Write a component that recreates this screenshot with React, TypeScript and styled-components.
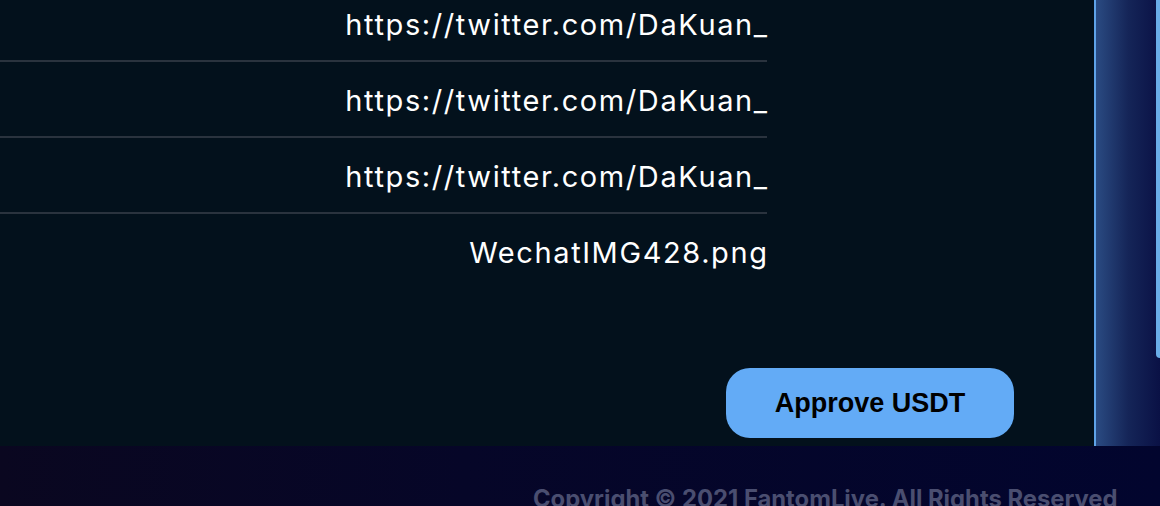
import styled, { createGlobalStyle } from "styled-components";

const GlobalStyle = createGlobalStyle`
    html, body {
        margin: 0;
        padding: 0;
        background: #02042c;
        overflow: hidden;
    }
    #root {
        width: 1160px;
        height: 506px;
    }
`;

const Page = styled.div`
    display: flex;
    flex-direction: column;
    width: 1160px;
    height: 506px;
    overflow: hidden;
`;

const Top = styled.div`
    display: flex;
    height: 446px;
`;

const Panel = styled.div`
    display: flex;
    flex-direction: column;
    width: 1094px;
    height: 446px;
    background-color: #03111c;
    border-right: 2px solid #5fa3e8;
    overflow: hidden;
`;

const List = styled.div`
    width: 767px;
    margin-top: -14px;
`;

const Row = styled.div<{ $last?: boolean }>`
    box-sizing: content-box;
    padding: 22px 0 18px;
    height: 34px;
    line-height: 34px;
    text-align: right;
    color: #ffffff;
    font-family: Inter, "Noto Sans", sans-serif;
    font-size: 29px;
    letter-spacing: 1.6px;
    border-bottom: 2px solid ${({ $last }) => ($last ? "transparent" : "#2a333e")};
`;

const RowText = styled.span`
    margin-right: -1.6px;
`;

const Actions = styled.div`
    display: flex;
    justify-content: flex-end;
    padding-right: 80px;
    margin-top: 78px;
`;

const ApproveButton = styled.button`
    width: 288px;
    height: 70px;
    border: 0;
    border-radius: 24px;
    background-color: #63abf6;
    color: #000000;
    font-family: "Liberation Sans", Arial, sans-serif;
    font-weight: 700;
    font-size: 27px;
    cursor: pointer;
`;

const Side = styled.div`
    display: flex;
    width: 64px;
    height: 446px;
    background: linear-gradient(90deg, #2a4b82 0%, #152558 50%, #0a1145 100%);
`;

const SideFill = styled.div`
    flex: 1;
`;

const Thumb = styled.div`
    width: 4px;
    height: 358px;
    background-color: #6aaee8;
    border-bottom-left-radius: 4px;
`;

const Footer = styled.footer`
    flex: 1;
    display: flex;
    background: linear-gradient(90deg, #0a0720 0%, #060628 40%, #02052e 100%);
    padding-left: 533px;
    padding-top: 39px;
    box-sizing: border-box;
`;

const Copyright = styled.span`
    font-family: Inter, "Noto Sans", sans-serif;
    font-weight: 700;
    font-size: 23.8px;
    color: #4a4e70;
    white-space: nowrap;
    line-height: 28px;
`;

const links = [
    "https://twitter.com/DaKuan_",
    "https://twitter.com/DaKuan_",
    "https://twitter.com/DaKuan_",
    "WechatIMG428.png",
];

export default function App() {
    return (
        <Page>
            <GlobalStyle />
            <Top>
                <Panel>
                    <List>
                        {links.map((text, i) => (
                            <Row key={i} $last={i === links.length - 1}>
                                <RowText>{text}</RowText>
                            </Row>
                        ))}
                    </List>
                    <Actions>
                        <ApproveButton>Approve USDT</ApproveButton>
                    </Actions>
                </Panel>
                <Side>
                    <SideFill />
                    <Thumb />
                </Side>
            </Top>
            <Footer>
                <Copyright>Copyright © 2021 FantomLive. All Rights Reserved</Copyright>
            </Footer>
        </Page>
    );
}
